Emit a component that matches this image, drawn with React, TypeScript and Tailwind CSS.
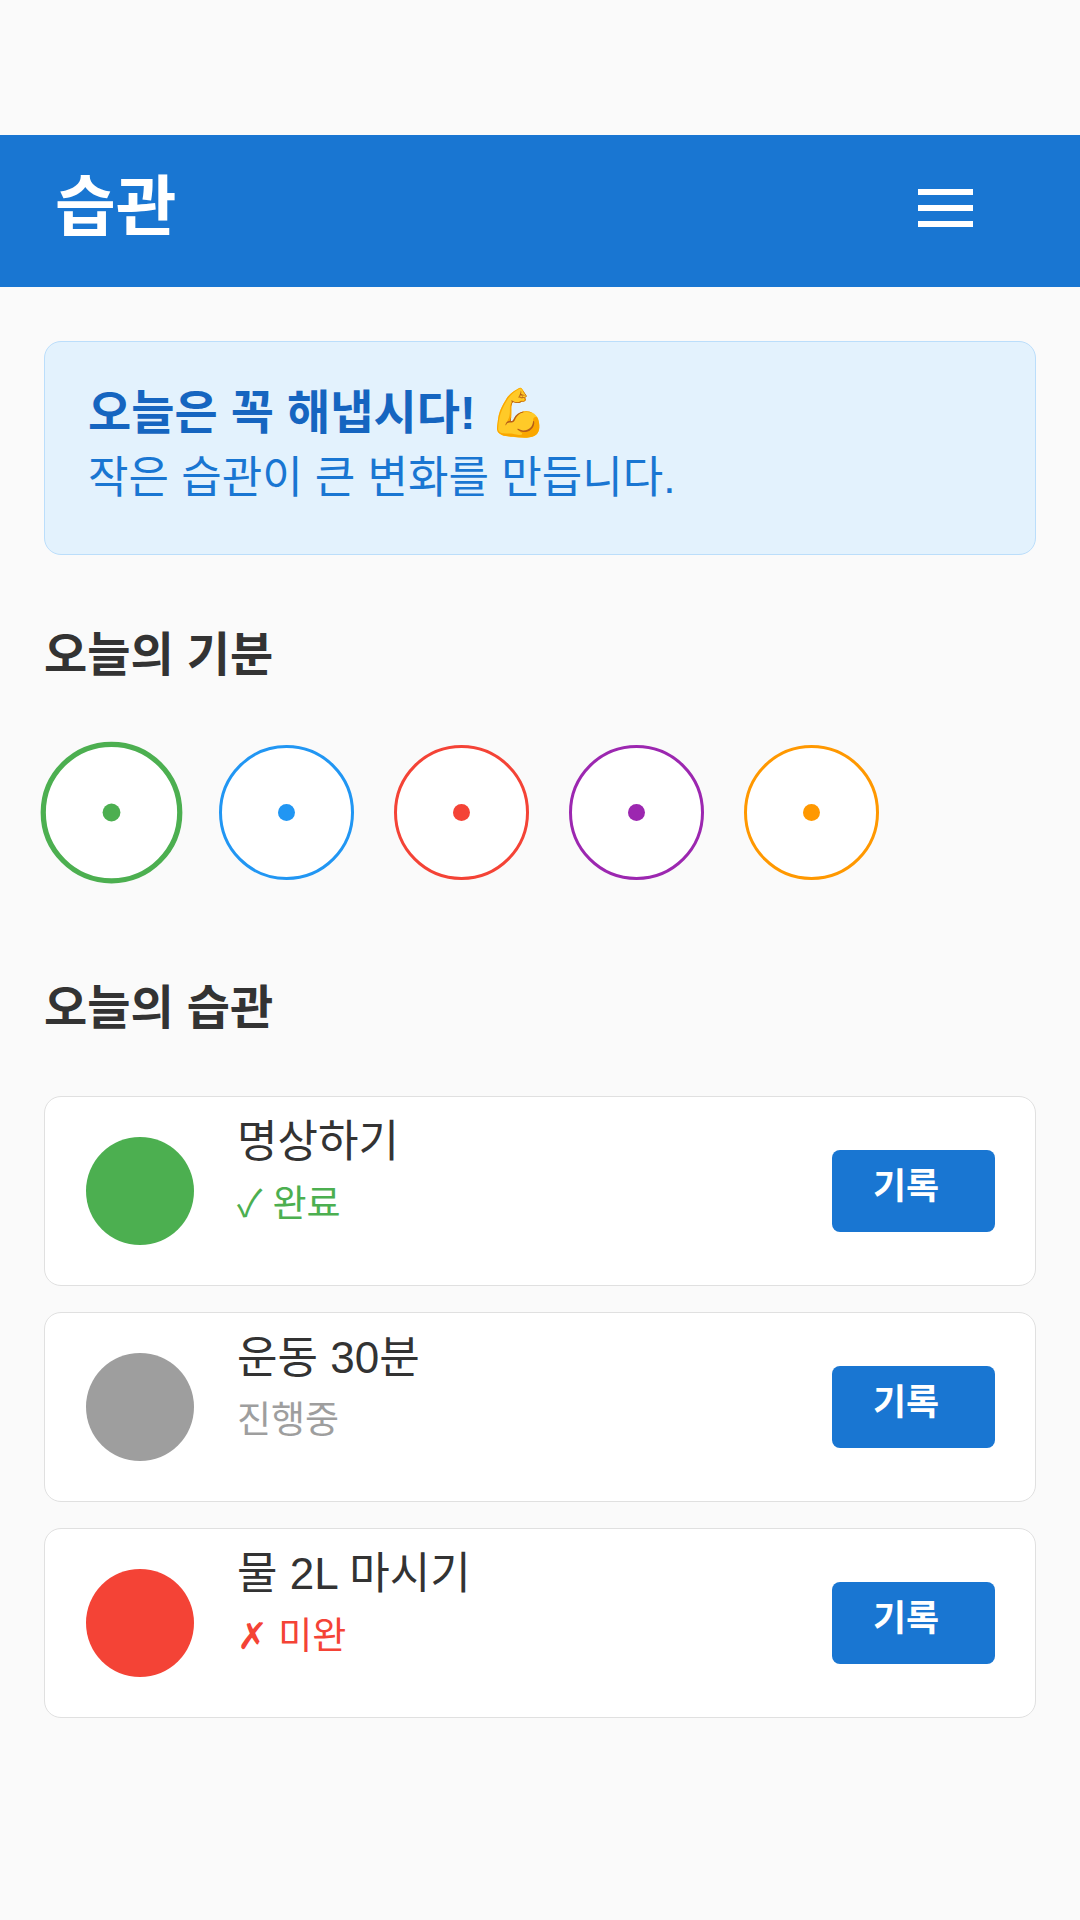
import React from 'react';

type Habit = {
    name: string;
    status: string;
    color: string;
    statusClass: string;
};

const moods = [
    { ring: 'border-[#4caf50]', dot: 'bg-[#4caf50]', selected: true },
    { ring: 'border-[#2196f3]', dot: 'bg-[#2196f3]', selected: false },
    { ring: 'border-[#f44336]', dot: 'bg-[#f44336]', selected: false },
    { ring: 'border-[#9c27b0]', dot: 'bg-[#9c27b0]', selected: false },
    { ring: 'border-[#ff9800]', dot: 'bg-[#ff9800]', selected: false },
];

const habits: Habit[] = [
    { name: '명상하기', status: '✓ 완료', color: 'bg-[#4caf50]', statusClass: 'text-[#4caf50]' },
    { name: '운동 30분', status: '진행중', color: 'bg-[#9e9e9e]', statusClass: 'text-[#9e9e9e]' },
    { name: '물 2L 마시기', status: '✗ 미완', color: 'bg-[#f44336]', statusClass: 'text-[#f44336]' },
];

const HabitCard: React.FC<{ habit: Habit }> = ({ habit }) => (
    <div className="flex items-center h-[190px] bg-white border border-[#e0e0e0] rounded-[17px] pl-[41px] pr-[40px]">
        <div className={`w-[108px] h-[108px] rounded-full shrink-0 ${habit.color}`} />
        <div className="flex flex-col ml-[43px] pb-[37px] flex-1">
            <span className="text-[44px] leading-[50px] text-[#333333]">{habit.name}</span>
            <span className={`text-[37px] leading-[46px] mt-[15px] ${habit.statusClass}`}>{habit.status}</span>
        </div>
        <button className="w-[163px] h-[82px] rounded-[8px] bg-[#1976d2] text-white text-[36px] font-bold text-left pl-[41px] pb-[8px]">
            기록
        </button>
    </div>
);

export default function App() {
    return (
        <div className="min-h-screen bg-[#fafafa] pt-[135px] pb-[200px] font-['Liberation_Sans','Noto_Sans_CJK_KR',sans-serif]">
            <header className="h-[152px] bg-[#1976d2] flex items-center justify-between pl-[55px] pr-[107px]">
                <h1 className="text-[66px] font-bold text-white leading-[76px] -mt-[8px]">습관</h1>
                <button className="w-[55px] flex flex-col gap-[10px] -mt-[6px]">
                    <span className="block h-[6px] bg-white" />
                    <span className="block h-[6px] bg-white" />
                    <span className="block h-[6px] bg-white" />
                </button>
            </header>

            <main className="px-[44px] pt-[54px]">
                <div className="bg-[#e3f2fd] border border-[#bbdefb] rounded-[17px] pl-[43px] pt-[41px] pb-[46px]">
                    <p className="text-[47px] leading-[60px] font-bold text-[#1565c0] mb-[5px]">오늘은 꼭 해냅시다! 💪</p>
                    <p className="text-[44px] leading-[60px] text-[#1976d2]">작은 습관이 큰 변화를 만듭니다.</p>
                </div>

                <h2 className="text-[47px] leading-[60px] font-bold text-[#333333] mt-[70px]">오늘의 기분</h2>
                <div className="flex gap-[40px] mt-[60px]">
                    {moods.map((m, i) => (
                        <div
                            key={i}
                            className={`w-[135px] h-[135px] rounded-full bg-white flex items-center justify-center ${m.ring} ${m.selected ? 'border-[5px] scale-105' : 'border-[3px]'}`}
                        >
                            <div className={`w-[17px] h-[17px] rounded-full ${m.dot}`} />
                        </div>
                    ))}
                </div>

                <h2 className="text-[47px] leading-[60px] font-bold text-[#333333] mt-[98px]">오늘의 습관</h2>
                <div className="flex flex-col gap-[26px] mt-[58px]">
                    {habits.map(h => <HabitCard key={h.name} habit={h} />)}
                </div>
            </main>
        </div>
    );
}
